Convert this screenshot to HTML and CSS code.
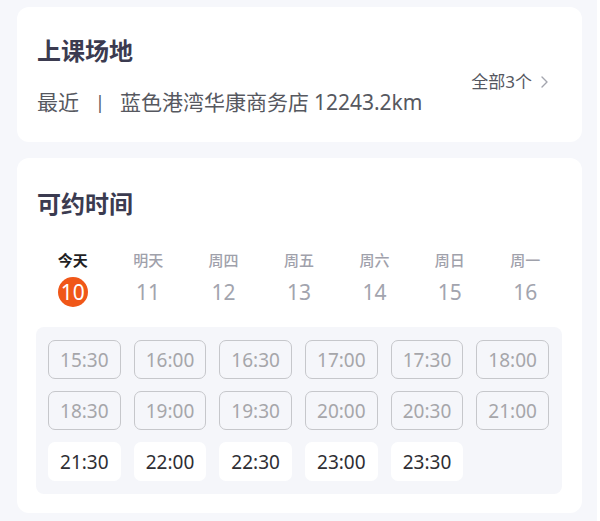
FILE: index.html
```html
<!DOCTYPE html>
<html lang="zh">
<head>
<meta charset="utf-8">
<title>上课场地</title>
<link rel="stylesheet" href="styles.css">
</head>
<body>
<main class="page">
  <section class="card venue">
    <div class="venue-info">
      <h2 class="title">上课场地</h2>
      <p class="venue-line"><span>最近</span><span class="sep">|</span><span>蓝色港湾华康商务店</span><span class="dist">12243.2km</span></p>
    </div>
    <a class="all-link">全部3个<svg class="chev" width="7" height="12" viewBox="0 0 7 12"><path d="M1 1 L6 6 L1 11" fill="none" stroke="#a3a5ae" stroke-width="1.4" stroke-linecap="round" stroke-linejoin="round"/></svg></a>
  </section>

  <section class="card schedule">
    <h2 class="title">可约时间</h2>
    <div class="days">
      <div class="day active"><span class="dname">今天</span><span class="dnum">10</span></div>
      <div class="day"><span class="dname">明天</span><span class="dnum">11</span></div>
      <div class="day"><span class="dname">周四</span><span class="dnum">12</span></div>
      <div class="day"><span class="dname">周五</span><span class="dnum">13</span></div>
      <div class="day"><span class="dname">周六</span><span class="dnum">14</span></div>
      <div class="day"><span class="dname">周日</span><span class="dnum">15</span></div>
      <div class="day"><span class="dname">周一</span><span class="dnum">16</span></div>
    </div>
    <div class="slots">
      <span class="slot off">15:30</span>
      <span class="slot off">16:00</span>
      <span class="slot off">16:30</span>
      <span class="slot off">17:00</span>
      <span class="slot off">17:30</span>
      <span class="slot off">18:00</span>
      <span class="slot off">18:30</span>
      <span class="slot off">19:00</span>
      <span class="slot off">19:30</span>
      <span class="slot off">20:00</span>
      <span class="slot off">20:30</span>
      <span class="slot off">21:00</span>
      <span class="slot on">21:30</span>
      <span class="slot on">22:00</span>
      <span class="slot on">22:30</span>
      <span class="slot on">23:00</span>
      <span class="slot on">23:30</span>
    </div>
  </section>
</main>
</body>
</html>
```
FILE: styles.css
```css
* { box-sizing: border-box; }
html, body { margin: 0; padding: 0; background: #ffffff; }
body {
  font-family: "Noto Sans", "Noto Sans CJK SC", sans-serif;
  width: 600px;
  height: 521px;
  overflow: hidden;
}
.page {
  width: 597px;
  height: 521px;
  background: #f6f7fb;
  padding: 7px 15px 0 17px;
  display: flex;
  flex-direction: column;
  gap: 16px;
}
.card {
  background: #ffffff;
  border-radius: 12px;
  width: 565px;
}
.title {
  margin: 0;
  font-size: 24px;
  line-height: 30px;
  font-weight: 700;
  color: #3b3b50;
}
.venue {
  height: 135px;
  padding: 29px 34px 0 20px;
  display: flex;
  align-items: flex-start;
  justify-content: space-between;
}
.venue-line {
  margin: 22px 0 0;
  font-size: 21px;
  line-height: 28px;
  color: #56585f;
  display: flex;
  white-space: nowrap;
}
.sep { margin: 0 15px 0 16px; font-size: 18px; }
.dist { margin-left: 5px; }
.all-link {
  margin-top: 33px;
  font-size: 17px;
  line-height: 26px;
  color: #55575f;
  display: flex;
  align-items: center;
  gap: 9px;
}
.schedule {
  height: 355px;
  padding: 31px 20px 19px 19px;
}
.schedule .title { margin-left: 1px; }
.days {
  margin: 31px -1px 0 -1px;
  display: grid;
  grid-template-columns: repeat(7, 1fr);
}
.day {
  display: flex;
  flex-direction: column;
  align-items: center;
}
.dname {
  font-size: 15px;
  line-height: 20px;
  font-weight: 500;
  color: #9fa1ab;
}
.dnum {
  margin-top: 7px;
  width: 30px;
  height: 30px;
  border-radius: 50%;
  font-size: 21px;
  line-height: 30px;
  text-align: center;
  color: #a2a4ae;
}
.day.active .dname { color: #1f1f24; font-weight: 700; }
.day.active .dnum { background: #f05718; color: #ffffff; }
.slots {
  margin-top: 20px;
  background: #f5f6fa;
  border-radius: 8px;
  padding: 13px 13px 13px 12px;
  display: grid;
  grid-template-columns: repeat(6, 1fr);
  column-gap: 13px;
  row-gap: 12px;
}
.slot {
  height: 39px;
  border-radius: 7px;
  font-size: 19px;
  display: flex;
  align-items: center;
  justify-content: center;
}
.slot.off {
  border: 1.5px solid #c6c7cb;
  color: #a6a6aa;
}
.slot.on {
  background: #ffffff;
  color: #2e2e33;
}
```
